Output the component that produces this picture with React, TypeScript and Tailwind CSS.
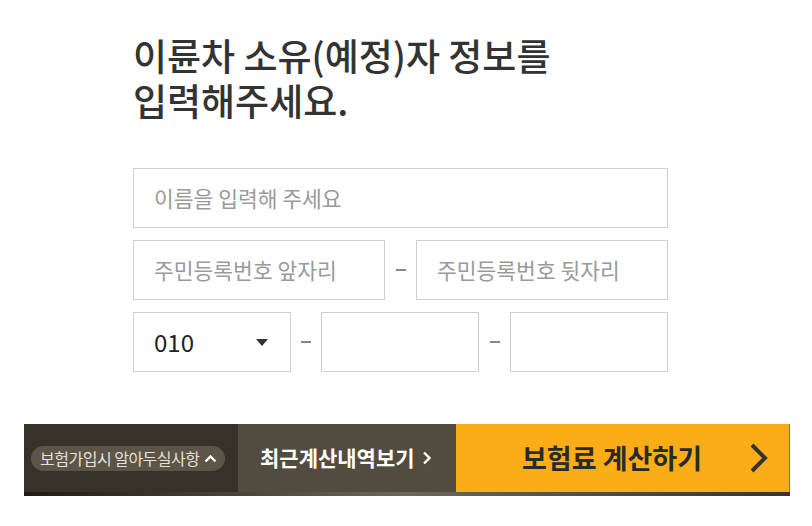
const font = { fontFamily: '"Noto Sans CJK KR", "Noto Sans", sans-serif' };

const Field = ({ placeholder, className }: { placeholder?: string; className: string }) => (
  <div className={`h-[60px] border border-[#cfcfcf] bg-white flex items-center px-5 text-[21.5px] text-[#9a9a9a] ${className}`}>
    {placeholder}
  </div>
);

const Dash = ({ className }: { className: string }) => (
  <div className={`flex items-center justify-center ${className}`}>
    <div className="w-[10px] h-[2px] bg-[#888]" />
  </div>
);

export default function App() {
  return (
    <div className="w-[812px] h-[526px] bg-white overflow-hidden" style={font}>
      <div className="ml-[133px] w-[535px] pt-[33px]">
        <h1 className="text-[37px] leading-[45px] font-medium text-[#333]">
          <span className="block">이륜차 소유(예정)자 정보를</span>
          <span className="block">입력해주세요.</span>
        </h1>

        <div className="mt-[45px] flex flex-col gap-[12px]">
          <Field placeholder="이름을 입력해 주세요" className="w-full" />
          <div className="flex">
            <Field placeholder="주민등록번호 앞자리" className="w-[252px]" />
            <Dash className="w-[31px]" />
            <Field placeholder="주민등록번호 뒷자리" className="w-[252px]" />
          </div>
          <div className="flex">
            <div className="w-[158px] h-[60px] border border-[#cfcfcf] flex items-center justify-between pl-5 pr-[22px]">
              <span className="text-[24px] text-[#222]">010</span>
              <svg width="12" height="7" viewBox="0 0 12 7">
                <path d="M0 0h12L6 7z" fill="#333" />
              </svg>
            </div>
            <Dash className="w-[30px]" />
            <Field className="w-[158px]" />
            <Dash className="w-[31px]" />
            <Field className="w-[158px]" />
          </div>
        </div>
      </div>

      <div className="ml-[24px] mt-[52px] w-[766px]">
        <div className="flex h-[68px]">
          <div className="w-[214px] bg-[#36322a] flex items-center pl-[7px]">
            <div className="h-[25px] rounded-full bg-[#5b5447] flex items-center pl-[9px] pr-[8px] gap-[4px] text-[16px] text-[#e6e2da] tracking-[-0.5px]">
              보험가입시 알아두실사항
              <svg width="13" height="9" viewBox="0 0 13 9">
                <path d="M1.5 7.5L6.5 2.5l5 5" fill="none" stroke="#fff" strokeWidth="2.4" />
              </svg>
            </div>
          </div>
          <div className="w-[218px] bg-[#524c40] flex items-center pl-[22px] gap-[7px] text-white text-[21px] font-bold">
            최근계산내역보기
            <svg width="10" height="14" viewBox="0 0 10 14">
              <path d="M2 1.5l5.5 5.5L2 12.5" fill="none" stroke="#fff" strokeWidth="2.4" />
            </svg>
          </div>
          <div className="flex-1 bg-[#fbad18] border-r border-[#8a7b4c] flex items-center pl-[66px] pr-[20px] justify-between text-[27px] font-bold text-[#2a2a2a]">
            보험료 계산하기
            <svg width="20" height="32" viewBox="0 0 20 32">
              <path d="M3 3l13 13L3 29" fill="none" stroke="#333" strokeWidth="4" />
            </svg>
          </div>
        </div>
        <div className="h-[4px] bg-gradient-to-r from-[#1e1c18] via-[#6f665a] to-[#3a352c]" />
      </div>
    </div>
  );
}
